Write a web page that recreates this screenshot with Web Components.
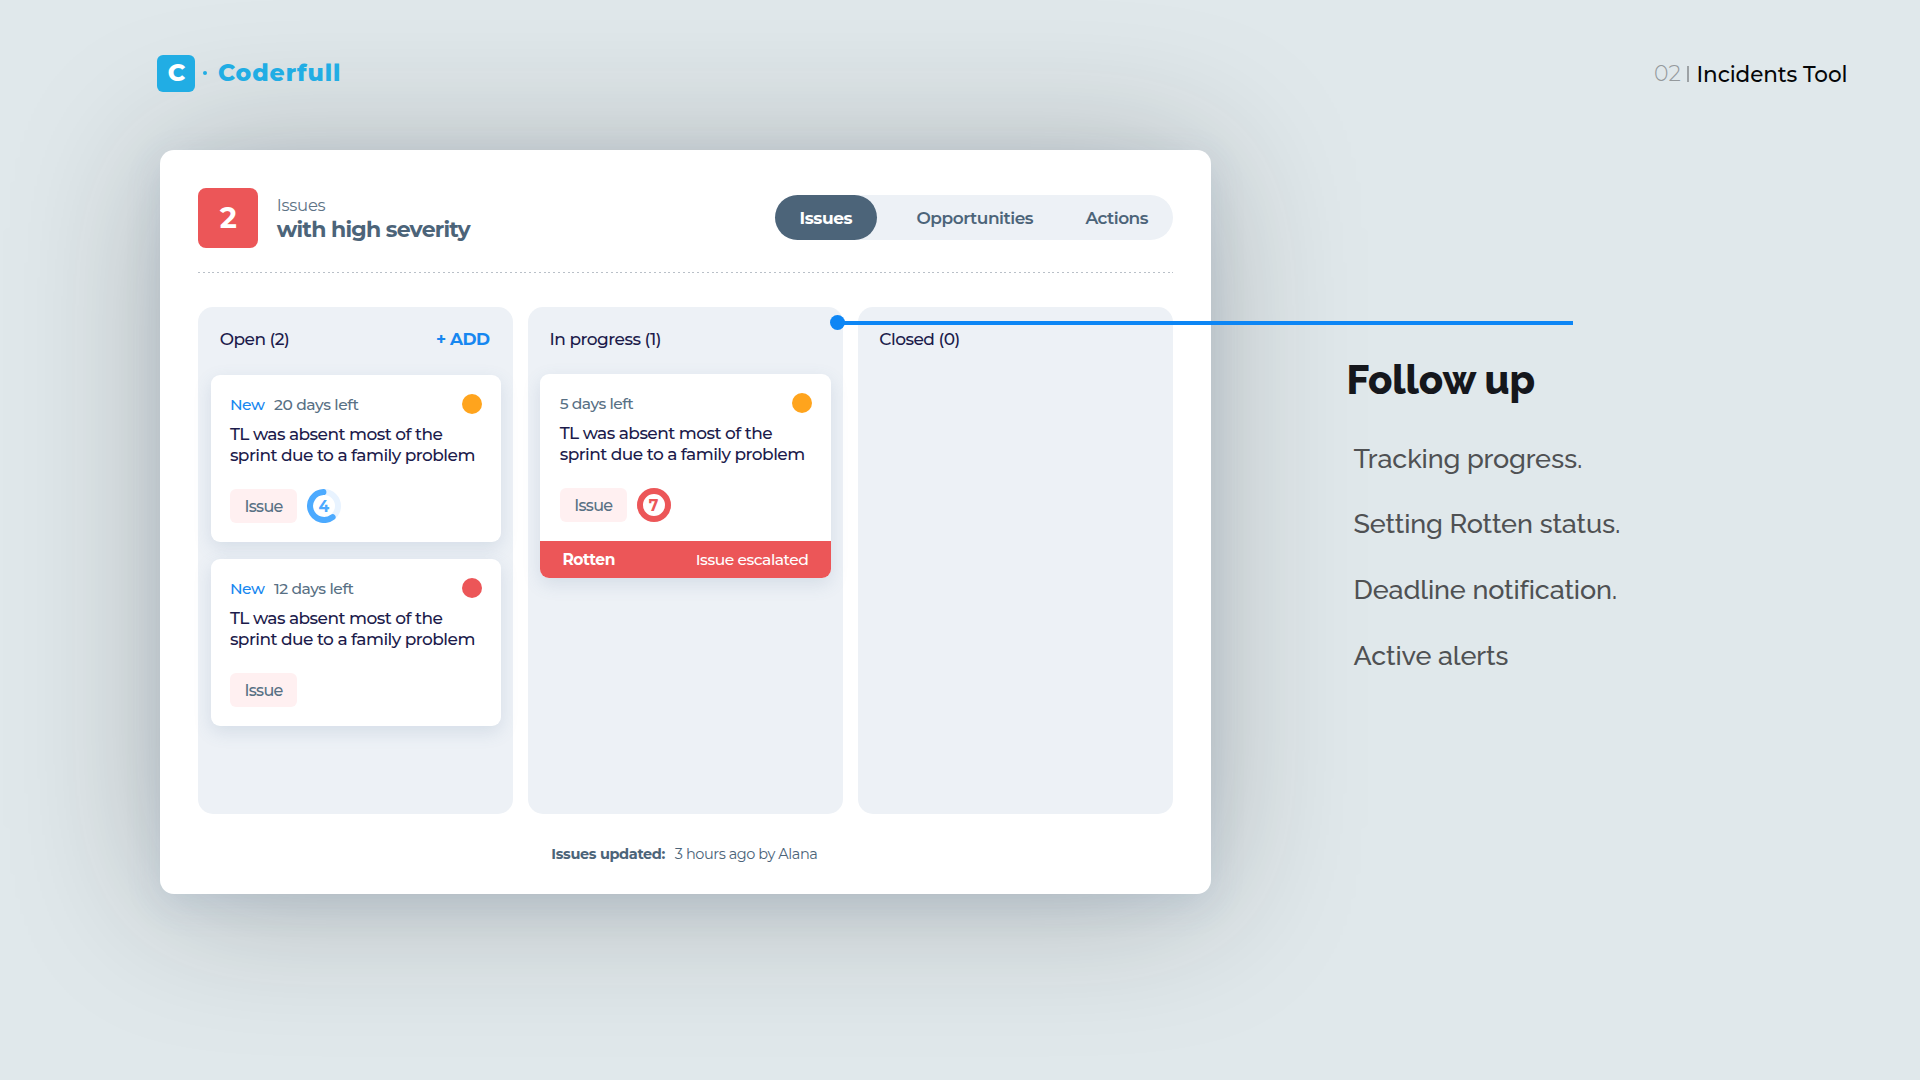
<!DOCTYPE html>
<html lang="en">
<head>
<meta charset="utf-8">
<title>Coderfull - Incidents Tool</title>
<style>
    body {
        margin: 0;
        width: 1920px;
        height: 1080px;
        overflow: hidden;
        background: #e0e8eb;
        font-family: Montserrat, Inter, "Open Sans", sans-serif;
    }
</style>
</head>
<body>
<incidents-slide></incidents-slide>

<script>
class BaseElement extends HTMLElement {
    constructor() {
        super()
        this.attachShadow({ mode: "open" })
    }

    connectedCallback() {
        const template = document.createElement('template')
        template.innerHTML = `<style>${this.getStyles()}</style>${this.getTemplate()}`
        this.shadowRoot.replaceChildren(template.content.cloneNode(true))
    }

    attr(name, fallback = '') {
        return this.getAttribute(name) || fallback
    }
}

// One line of text, tracked so that it fills the given width
class FitText extends BaseElement {
    getTemplate() {
        return `<span><slot></slot></span>`
    }

    getStyles() {
        return `
            :host { display: block; white-space: nowrap; width: ${this.attr('w')}px; flex: none; }
            span { display: inline-block; }
        `
    }

    connectedCallback() {
        super.connectedCallback()
        const span = this.shadowRoot.querySelector('span')
        const gaps = this.textContent.length - 1
        if (gaps > 0) {
            const spacing = (Number(this.attr('w')) - span.getBoundingClientRect().width) / gaps
            span.style.letterSpacing = spacing.toFixed(3) + 'px'
            span.style.marginRight = (-spacing).toFixed(3) + 'px'
        }
    }
}

class BrandLogo extends BaseElement {
    getTemplate() {
        return `
            <div class="mark">C</div>
            <div class="dot"></div>
            <fit-text w="122.5">Coderfull</fit-text>
        `
    }

    getStyles() {
        return `
            :host { display: flex; align-items: center; color: #21ade4; font-weight: 800; font-size: 23.5px; line-height: 36px; }
            .mark { width: 38px; height: 37px; border-radius: 6px; background: #21ade4; color: #fff; text-align: center; font-size: 24px; }
            .dot { width: 4px; height: 4px; border-radius: 2px; background: #21ade4; margin: 0 10.5px 0 8px; }
        `
    }
}

class PageLabel extends BaseElement {
    getTemplate() {
        return `<fit-text class="num" w="27">02</fit-text><i></i><fit-text w="151">Incidents Tool</fit-text>`
    }

    getStyles() {
        return `
            :host { display: flex; align-items: center; padding-top: 2px; font-size: 21.5px; line-height: 30px; color: #050608; font-weight: 500; }
            .num { color: #94999c; font-weight: 300; font-size: 22px; }
            i { width: 1.5px; height: 16px; background: #9da2a5; margin: 0 8px 0 6px; }
        `
    }
}

class SeveritySummary extends BaseElement {
    getTemplate() {
        return `
            <div class="count">${this.attr('count')}</div>
            <div class="text">
                <fit-text class="top" w="49">Issues</fit-text>
                <fit-text class="bottom" w="194">with high severity</fit-text>
            </div>
        `
    }

    getStyles() {
        return `
            :host { display: flex; gap: 18.5px; color: #4c6479; }
            .count { width: 60px; height: 60px; border-radius: 8px; background: #ec5658; color: #fff; font-size: 29px; font-weight: 700; line-height: 60px; text-align: center; }
            .text { padding-top: 6px; }
            .top { font-size: 16.5px; line-height: 22px; font-weight: 400; color: #5e7386; }
            .bottom { font-size: 22px; line-height: 28px; font-weight: 700; }
        `
    }
}

class BoardTabs extends BaseElement {
    getTemplate() {
        return `
            <div class="tab active"><fit-text w="53">Issues</fit-text></div>
            <div class="tab second"><fit-text w="117">Opportunities</fit-text></div>
            <div class="tab"><fit-text w="63">Actions</fit-text></div>
        `
    }

    getStyles() {
        return `
            :host { display: flex; width: 398px; height: 45px; border-radius: 23px; background: #edf1f6; color: #4c6479; font-size: 17px; font-weight: 600; line-height: 46px; }
            .active { width: 102px; box-sizing: border-box; padding-left: 25px; border-radius: 23px; background: #4c6479; color: #fff; font-weight: 700; }
            .second { margin: 0 52px 0 40px; }
        `
    }
}

class ProgressRing extends BaseElement {
    getTemplate() {
        const full = this.hasAttribute('full')
        const arc = full
            ? `<circle cx="17" cy="17" r="14" stroke="#ec5658"/>`
            : `<circle cx="17" cy="17" r="14" stroke="#e8f3ff"/>
               <path d="M16.4 3 A14 14 0 1 0 25.6 28.1" stroke="#4caaff" stroke-linecap="round"/>`
        return `<svg width="34" height="34" fill="none" stroke-width="6">${arc}</svg><b>${this.attr('value')}</b>`
    }

    getStyles() {
        const color = this.hasAttribute('full') ? '#ec5658' : '#4caaff'
        return `
            :host { display: grid; width: 34px; height: 34px; }
            svg, b { grid-area: 1 / 1; }
            b { color: ${color}; font-size: 15.5px; font-weight: 700; line-height: 35px; text-align: center; }
        `
    }
}

class IssueCard extends BaseElement {
    getTemplate() {
        const isNew = this.hasAttribute('new')
        return `
            <div class="body">
                <div class="meta">
                    ${isNew ? '<fit-text class="new" w="35">New</fit-text>' : ''}
                    <fit-text w="${this.attr('days-width')}">${this.attr('days')} days left</fit-text>
                    <div class="dot"></div>
                </div>
                <div class="title">
                    <fit-text w="213">TL was absent most of the</fit-text>
                    <fit-text w="245.5">sprint due to a family problem</fit-text>
                </div>
                <div class="foot">
                    <div class="badge"><fit-text w="39">Issue</fit-text></div>
                    <slot></slot>
                </div>
            </div>
            ${this.hasAttribute('rotten') ? `
            <div class="rotten">
                <fit-text w="53"><b>Rotten</b></fit-text>
                <fit-text w="113">Issue escalated</fit-text>
            </div>` : ''}
        `
    }

    getStyles() {
        return `
            :host { display: block; border-radius: 9px; overflow: hidden; background: #fff; box-shadow: 0 6px 18px rgba(76, 110, 150, 0.15); }
            .body { height: 166.5px; box-sizing: border-box; padding: 19px 18.5px 0 19.3px; }
            .meta { display: flex; height: 21px; line-height: 21px; gap: 9px; font-size: 15.5px; font-weight: 500; color: #587084; }
            .new { color: #1787f0; }
            .dot { width: 20px; height: 20px; border-radius: 50%; background: ${this.attr('color', '#ffa41d')}; margin-left: auto; }
            .title { margin-top: 9px; font-size: 17px; line-height: 20.5px; color: #1c1b4b; font-weight: 500; }
            .foot { display: flex; gap: 9.5px; margin-top: 23.5px; }
            .badge { width: 67.5px; height: 34px; box-sizing: border-box; padding-left: 14.5px; border-radius: 6px; background: #fff0f1; color: #587084; font-size: 16px; font-weight: 500; line-height: 35px; }
            .rotten { display: flex; justify-content: space-between; height: 37px; padding: 0 22px; background: #ec5658; color: #fff; font-size: 15.5px; font-weight: 500; line-height: 38px; }
        `
    }
}

class BoardColumn extends BaseElement {
    getTemplate() {
        return `
            <header>
                <fit-text w="${this.attr('label-width')}">${this.attr('label')}</fit-text>
                ${this.hasAttribute('add') ? '<fit-text class="add" w="54">+ ADD</fit-text>' : ''}
            </header>
            <div class="cards"><slot></slot></div>
        `
    }

    getStyles() {
        return `
            :host { display: block; border-radius: 15px; background: #edf1f6; }
            header { display: flex; justify-content: space-between; padding: 19px 23px 0 21.5px; height: 24px; font-size: 17px; line-height: 26px; color: #1c1b4b; font-weight: 500; }
            .add { color: #1787f0; font-weight: 700; }
            .cards { display: flex; flex-direction: column; gap: 17.5px; padding: ${this.attr('top', '25')}px 12px 0 12.4px; }
        `
    }
}

class IssueBoard extends BaseElement {
    getTemplate() {
        return `
            <div class="head">
                <severity-summary count="2"></severity-summary>
                <board-tabs></board-tabs>
            </div>
            <div class="rule"></div>
            <div class="columns">
                <board-column label="Open (2)" label-width="70" add>
                    <issue-card new days="20" days-width="85"><progress-ring value="4"></progress-ring></issue-card>
                    <issue-card new days="12" days-width="80" color="#ec5658"></issue-card>
                </board-column>
                <board-column label="In progress (1)" label-width="112" top="24">
                    <issue-card days="5" days-width="74" rotten><progress-ring value="7" full></progress-ring></issue-card>
                </board-column>
                <board-column label="Closed (0)" label-width="81"></board-column>
            </div>
            <div class="updated">
                <fit-text w="114"><b>Issues updated:</b></fit-text>
                <fit-text w="143">3 hours ago by Alana</fit-text>
            </div>
        `
    }

    getStyles() {
        return `
            :host {
                display: block;
                box-sizing: border-box;
                width: 1051.5px;
                height: 743.5px;
                padding: 37.5px 38.5px 0 38.7px;
                border-radius: 14px;
                background: #fff;
                box-shadow:
                0 10px 36px rgba(70, 105, 165, 0.13),
                0 6px 150px rgba(30, 30, 30, 0.27);
            }
            .head { display: flex; justify-content: space-between; align-items: center; height: 60px; }
            board-tabs { margin-top: -1px; }
            .rule { height: 1px; margin-top: 24.5px; background: repeating-linear-gradient(90deg, #b9c0c8 0 2px, transparent 2px 4.8px); }
            .columns { display: grid; grid-template-columns: repeat(3, 314.8px); gap: 15px; height: 506.5px; margin-top: 34px; }
            .updated { display: flex; justify-content: center; gap: 9.5px; margin-top: 27.5px; padding-right: 1.5px; font-size: 14.5px; line-height: 26px; color: #4c6479; }
        `
    }
}

class FollowNotes extends BaseElement {
    getTemplate() {
        return `
            <fit-text class="title" w="188.5">Follow up</fit-text>
            <div class="list">
                <fit-text w="229">Tracking progress.</fit-text>
                <fit-text w="267">Setting Rotten status.</fit-text>
                <fit-text w="262.5">Deadline notification.</fit-text>
                <fit-text w="155">Active alerts</fit-text>
            </div>
        `
    }

    getStyles() {
        return `
            :host { display: block; font-family: Raleway, Lato, sans-serif; }
            .title { font-size: 40px; line-height: 50px; font-weight: 800; color: #15171c; }
            .list { display: grid; grid-auto-rows: 65.7px; margin: 21px 0 0 7px; font-size: 27px; font-weight: 500; line-height: 65.7px; color: #4f5153; }
        `
    }
}

class CalloutLine extends BaseElement {
    getTemplate() {
        return `<div class="knob"></div><div class="line"></div>`
    }

    getStyles() {
        return `
            :host { display: flex; align-items: center; }
            .knob { width: 15px; height: 15px; border-radius: 50%; background: #0d86f5; }
            .line { flex: 1; height: 4px; margin-left: -2px; background: #0d86f5; }
        `
    }
}

class IncidentsSlide extends BaseElement {
    getTemplate() {
        return `
            <header>
                <brand-logo></brand-logo>
                <page-label></page-label>
            </header>
            <main>
                <issue-board></issue-board>
                <follow-notes></follow-notes>
            </main>
            <callout-line></callout-line>
        `
    }

    getStyles() {
        return `
            :host { display: block; position: relative; width: 1920px; height: 1080px; }
            header { position: relative; z-index: 1; display: flex; justify-content: space-between; align-items: center; box-sizing: border-box; height: 150px; padding: 0 72.5px 3.5px 157.4px; }
            main { display: flex; padding-left: 159.5px; }
            follow-notes { margin: 204.5px 0 0 135.5px; }
            callout-line { position: absolute; left: 829.5px; top: 315.3px; width: 743.5px; }
        `
    }
}

customElements.define('fit-text', FitText)
customElements.define('brand-logo', BrandLogo)
customElements.define('page-label', PageLabel)
customElements.define('severity-summary', SeveritySummary)
customElements.define('board-tabs', BoardTabs)
customElements.define('progress-ring', ProgressRing)
customElements.define('issue-card', IssueCard)
customElements.define('board-column', BoardColumn)
customElements.define('issue-board', IssueBoard)
customElements.define('follow-notes', FollowNotes)
customElements.define('callout-line', CalloutLine)
customElements.define('incidents-slide', IncidentsSlide)
</script>
</body>
</html>
